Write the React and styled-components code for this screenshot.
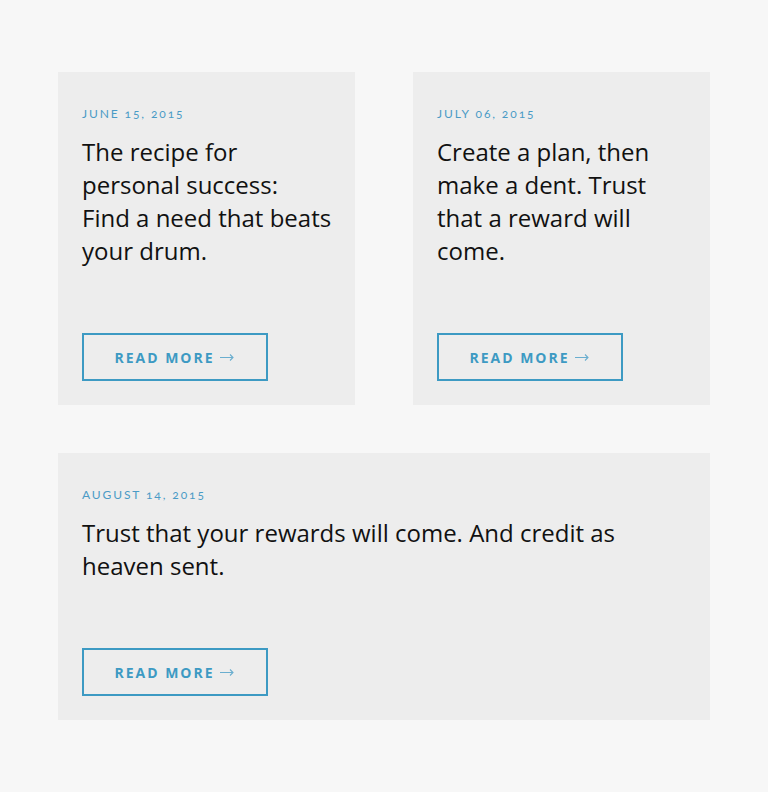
import React from 'react';
import styled, { createGlobalStyle } from 'styled-components';

const GlobalStyle = createGlobalStyle`
  html, body {
    margin: 0;
    padding: 0;
    background-color: #f7f7f7;
  }
`;

const posts = [
  { date: 'June 15, 2015', title: 'The recipe for personal success:\nFind a need that beats your drum.' },
  { date: 'July 06, 2015', title: 'Create a plan, then make a dent. Trust that a reward will come.' },
  { date: 'August 14, 2015', title: 'Trust that your rewards will come. And credit as heaven sent.', wide: true },
];

function Arrow() {
  return (
    <StArrow width="14" height="8" viewBox="0 0 14 8">
      <path d="M0 4.5 H13 M10 1.5 L13 4.5 L10 7.5" fill="none" stroke="currentColor" strokeWidth="1.1" />
    </StArrow>
  );
}

function App() {
  return (
    <>
      <GlobalStyle />
      <StPage>
        <StGrid>
          {posts.map((post) => (
            <StCard key={post.date} $wide={post.wide}>
              <StDate>{post.date}</StDate>
              <StTitle>{post.title}</StTitle>
              <StReadMore href="#">
                Read More
                <Arrow />
              </StReadMore>
            </StCard>
          ))}
        </StGrid>
      </StPage>
    </>
  );
}

export default App;

const StPage = styled.div`
  width: 768px;
  min-height: 792px;
  padding: 72px 58px;
  box-sizing: border-box;
  background-color: #f7f7f7;
`;

const StGrid = styled.div`
  display: grid;
  grid-template-columns: 297px 297px;
  column-gap: 58px;
  row-gap: 48px;
`;

const StCard = styled.article`
  grid-column: ${(p) => (p.$wide ? '1 / span 2' : 'auto')};
  background-color: #ededed;
  padding: 36px 22px 24px 24px;
  display: flex;
  flex-direction: column;
  align-items: flex-start;
`;

const StDate = styled.div`
  font-family: Lato, 'Open Sans', sans-serif;
  font-size: 12px;
  line-height: 12px;
  letter-spacing: 1.9px;
  text-transform: uppercase;
  font-variant-numeric: oldstyle-nums;
  color: #4a9bc6;
`;

const StTitle = styled.h2`
  margin: 15px 0 66px;
  white-space: pre-line;
  font-family: 'Open Sans', sans-serif;
  font-weight: 400;
  font-size: 24px;
  line-height: 33px;
  color: #111111;
`;

const StReadMore = styled.a`
  display: flex;
  align-items: center;
  justify-content: center;
  box-sizing: border-box;
  width: 186px;
  height: 48px;
  padding: 0 2px 0 0;
  border: 2px solid #3d9ac3;
  font-family: 'Open Sans', sans-serif;
  font-weight: 700;
  font-size: 14px;
  letter-spacing: 2px;
  text-transform: uppercase;
  text-decoration: none;
  color: #3d9ac3;
`;

const StArrow = styled.svg`
  margin-left: 5px;
  color: #6aaecf;
`;
